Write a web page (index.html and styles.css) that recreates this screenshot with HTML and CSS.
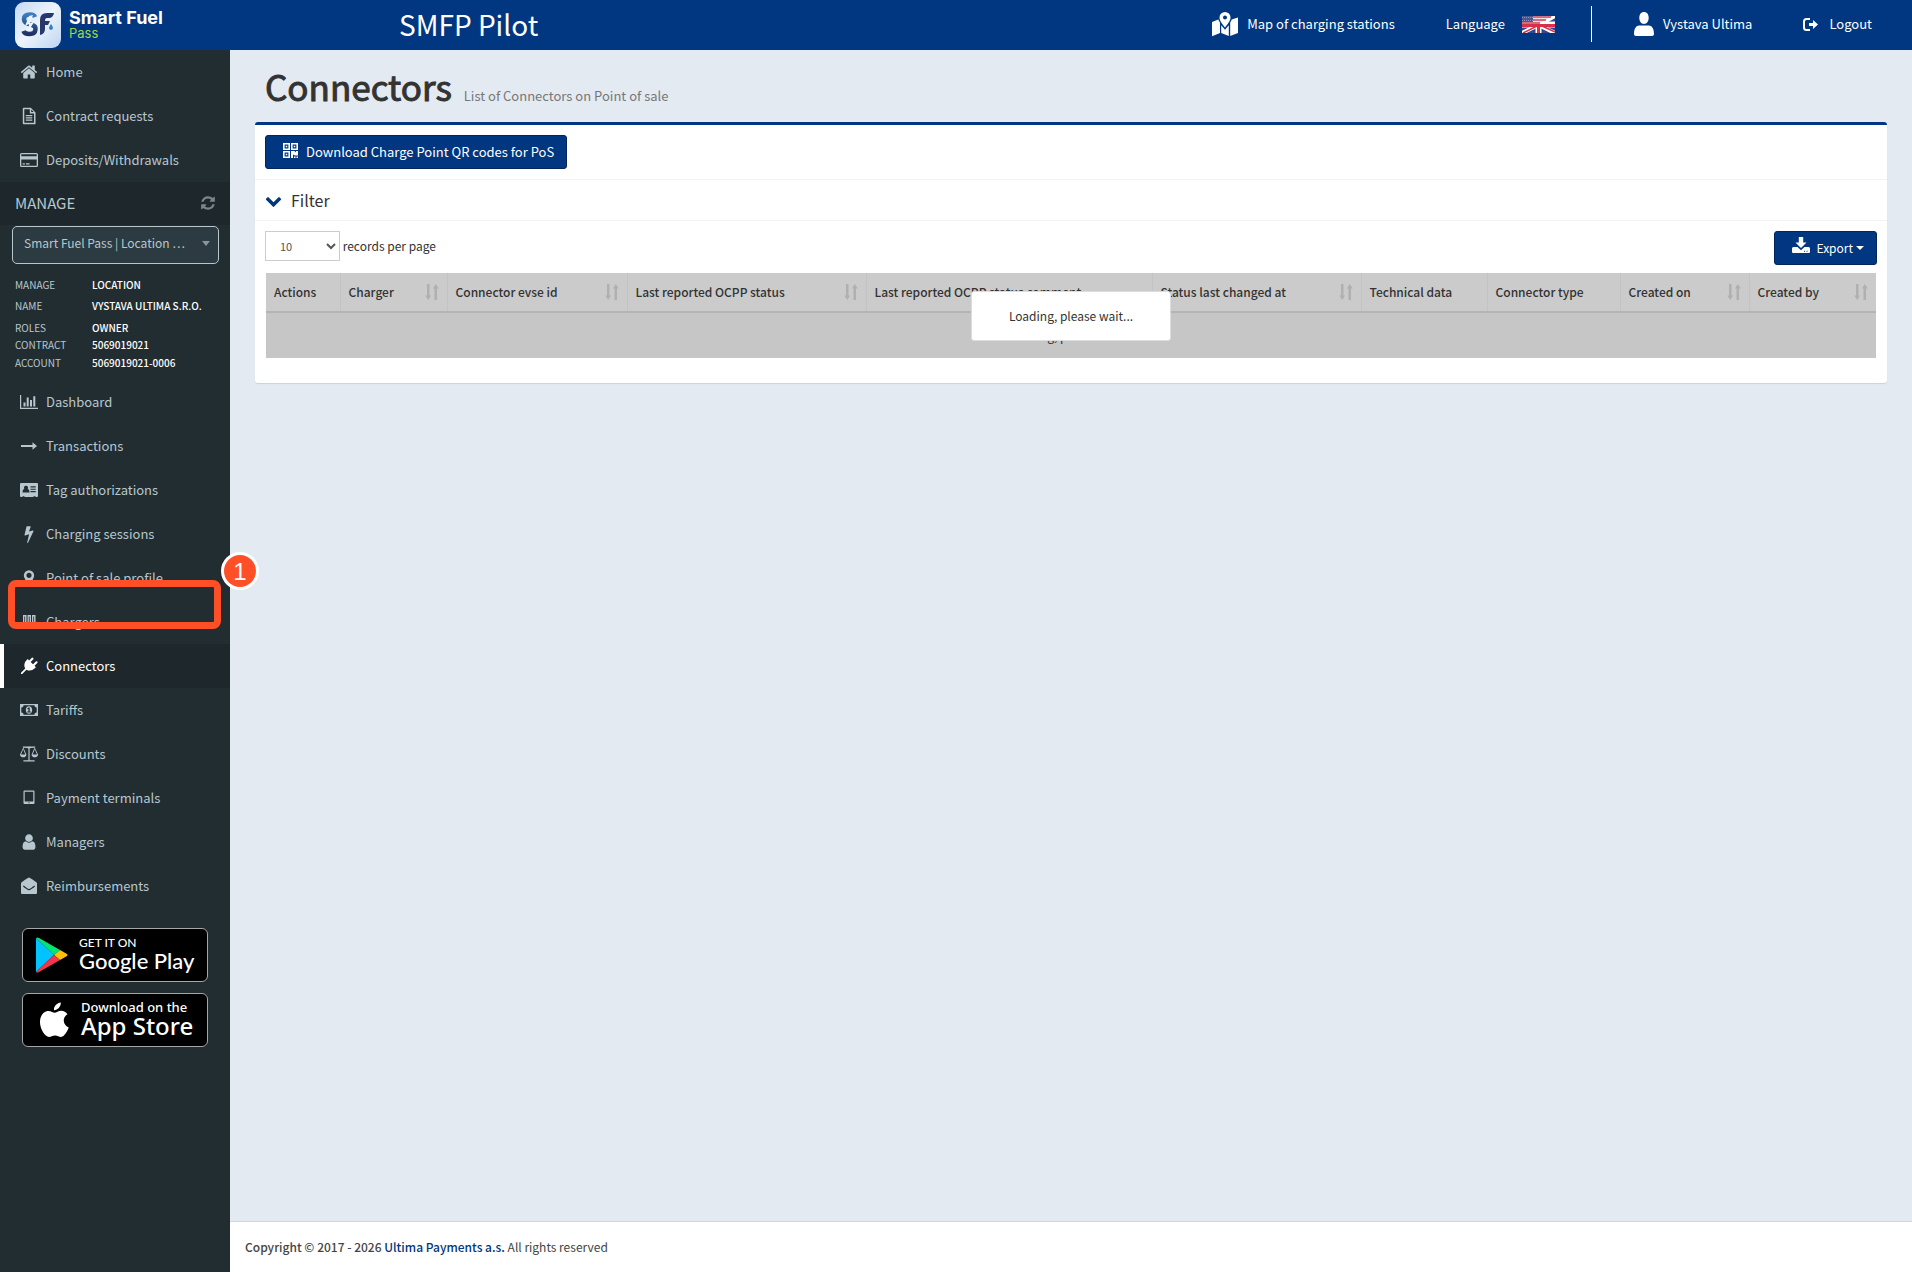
FILE: index.html
```html
<!DOCTYPE html>
<html lang="en">
<head>
  <meta charset="UTF-8" />
  <meta name="viewport" content="width=device-width, initial-scale=1" />
  <title>Connectors</title>
  <link rel="stylesheet" href="styles.css">
</head>
<body>

  <!-- Icon set -->
  <svg class="sprite" aria-hidden="true">
    <symbol id="i-home" viewBox="0 0 1792 1792"><path d="M1472 992v480q0 26-19 45t-45 19h-384v-384h-256v384h-384q-26 0-45-19t-19-45v-480q0-1 .5-3t.5-3l575-474 575 474q1 2 1 6zm223-69l-62 74q-8 9-21 11h-3q-13 0-21-7l-692-577-692 577q-12 8-24 7-13-2-21-11l-62-74q-8-10-7-23.5t11-21.5l719-599q32-26 76-26t76 26l244 204v-195q0-14 9-23t23-9h192q14 0 23 9t9 23v408l219 182q10 8 11 21.5t-7 23.5z"/></symbol>
    <symbol id="i-file" viewBox="0 0 18 18"><path fill-rule="evenodd" d="M3.800.8h7l4.700 4.700v11.700h-11.700a1 1 0 0 1-1-1V1.800a1 1 0 0 1 1-1zM4.300 2.300v13.400h9.700V6.500h-4.200V2.300zM11.200 2.600v2.500h2.500zM5.800 8h6.500v1.200H5.800zM5.800 10.300h6.500v1.200H5.800zM5.800 12.600h6.500v1.200H5.800z"/></symbol>
    <symbol id="i-card" viewBox="0 0 18 18"><path fill-rule="evenodd" d="M1.500 2h15A1.500 1.500 0 0 1 18 3.500v11a1.500 1.500 0 0 1-1.500 1.500h-15A1.500 1.500 0 0 1 0 14.500v-11A1.500 1.500 0 0 1 1.500 2zM1.300 3.300v2h15.400v-2zM1.300 8.500v6.200h15.400V8.500zM2.600 12.300h2.300v1.200H2.600zM6 12.300h3.500v1.200H6z"/></symbol>
    <symbol id="i-refresh" viewBox="0 0 1792 1792"><path d="M1639 1056q0 5-1 7-64 268-268 434.500t-478 166.500q-146 0-282.500-55t-243.500-157l-129 129q-19 19-45 19t-45-19-19-45v-448q0-26 19-45t45-19h448q26 0 45 19t19 45-19 45l-137 137q71 66 161 102t187 36q134 0 250-65t186-179q11-17 53-117 8-23 30-23h192q13 0 22.500 9.500t9.500 22.500zm25-800v448q0 26-19 45t-45 19h-448q-26 0-45-19t-19-45 19-45l138-138q-148-137-349-137-134 0-250 65t-186 179q-11 17-53 117-8 23-30 23h-199q-13 0-22.500-9.500t-9.500-22.500v-7q65-268 270-434.500t480-166.500q146 0 284 55.500t245 156.500l130-129q19-19 45-19t45 19 19 45z"/></symbol>
    <symbol id="i-chart" viewBox="0 0 18 18"><path d="M0 2h1.200v12.800H18V16H0zM3.500 9.500h2v4h-2zM6.700 4.500h2v9h-2zM10 7h2v6.500h-2zM13.300 3.200h2v10.300h-2z"/></symbol>
    <symbol id="i-arrow" viewBox="0 0 18 18"><path d="M1 7.900h11.500V5.200L17 9l-4.500 3.700v-2.600H1z"/></symbol>
    <symbol id="i-idcard" viewBox="0 0 18 18"><path fill-rule="evenodd" d="M1 2h16a1 1 0 0 1 1 1v12a1 1 0 0 1-1 1h-1.500v-.8h-2v.8h-9v-.8h-2v.8H1a1 1 0 0 1-1-1V3a1 1 0 0 1 1-1zM6 4.700a2 2 0 0 0-1.500 3.400c-1.300.2-2 1.300-2 3.400h7c0-2.100-.7-3.200-2-3.400A2 2 0 0 0 6 4.700zM10.500 5.300v1.100h5.200V5.300zM10.500 7.700v1.100h5.200V7.700zM10.500 10.100v1.100h5.200v-1.100z"/></symbol>
    <symbol id="i-bolt" viewBox="0 0 1792 1792"><path d="M1333 566q18 20 7 44l-540 1157q-13 25-42 25-4 0-14-2-17-5-25.500-19t-4.500-30l197-808-406 101q-4 1-12 1-18 0-31-11-18-15-13-39l201-825q4-14 16-23t28-9h328q19 0 32 12.500t13 29.500q0 8-5 18l-171 463 396-98q8-2 12-2 19 0 34 15z"/></symbol>
    <symbol id="i-marker" viewBox="0 0 1792 1792"><path d="M1152 640q0-106-75-181t-181-75-181 75-75 181 75 181 181 75 181-75 75-181zm256 0q0 109-33 179l-364 774q-16 33-47.500 52t-67.500 19-67.500-19-46.500-52l-365-774q-33-70-33-179 0-212 150-362t362-150 362 150 150 362z"/></symbol>
    <symbol id="i-chargers" viewBox="0 0 18 18"><path fill-rule="evenodd" d="M3 2h3.500v13H3zM7.500 2h3.500v13H7.500zM12 2h3.500v13H12zM4.300 3.500v8h.8v-8zM8.800 3.500v8h.8v-8zM13.300 3.500v8h.8v-8z"/></symbol>
    <symbol id="i-plug" viewBox="0 0 18 18"><path d="M17.300 4.500a1.100 1.100 0 0 1 0 1.500L14.500 8.800l1.400 1.400-1.400 1.400c-2.200 2.200-5.500 2.600-8 1.100L2.200 17H1v-1.200l4.200-4.300c-1.500-2.500-1.100-5.800 1.100-8L7.700 2.100l1.400 1.400L11.900.7a1.100 1.100 0 0 1 1.500 1.500L10.600 5l2.400 2.300 2.800-2.800a1.100 1.100 0 0 1 1.500 0z"/></symbol>
    <symbol id="i-money" viewBox="0 0 18 18"><path fill-rule="evenodd" d="M0 3h18v12H0zM3.600 4.300a2.300 2.300 0 0 1-2.300 2.300v4.800a2.300 2.300 0 0 1 2.300 2.300h10.800a2.300 2.300 0 0 1 2.300-2.300V6.600a2.300 2.300 0 0 1-2.300-2.300zM9 5.200c2 0 3.200 1.700 3.200 3.800S11 12.800 9 12.800 5.800 11.100 5.800 9 7 5.200 9 5.200zM8.600 6.500l-1.400 1 .6.800.6-.4v2.700H7.300v1h3.400v-1h-1V6.500z"/></symbol>
    <symbol id="i-scale" viewBox="0 0 18 18"><path fill-rule="evenodd" d="M8.400 1.500a.9.900 0 0 1 1.200 0h5.600v1h-.5L18 9.500c0 1.900-1.400 2.800-3.200 2.800s-3.200-.9-3.200-2.800l3-6.700-4.200.2a1 1 0 0 1-.8.600v11.600h5v1.200H3.400v-1.200h5V3.600a1 1 0 0 1-.8-.6l-4.200-.2 3 6.700c0 1.900-1.400 2.800-3.200 2.800S0 11.400 0 9.500l3.300-7h-.5v-1zM3.200 4.300L1 9.500h4.400zM14.800 4.300l-2.200 5.200H17z"/></symbol>
    <symbol id="i-tablet" viewBox="0 0 18 18"><path fill-rule="evenodd" d="M4.500 1.500h9a1 1 0 0 1 1 1v11.500a1 1 0 0 1-1 1h-9a1 1 0 0 1-1-1V2.500a1 1 0 0 1 1-1zM4.700 2.800v9.700h8.600V2.800zM8.500 13.200v1h1v-1z"/></symbol>
    <symbol id="i-user" viewBox="0 0 1792 1792"><path d="M1536 1399q0 109-62.500 187t-150.500 78h-854q-88 0-150.500-78t-62.500-187q0-85 8.500-160.500t31.500-152 58.500-131 94-89 134.500-34.500q131 128 313 128t313-128q76 0 134.500 34.500t94 89 58.500 131 31.500 152 8.500 160.500zm-256-887q0 159-112.500 271.500t-271.500 112.500-271.500-112.500-112.500-271.500 112.500-271.500 271.500-112.500 271.500 112.500 112.500 271.500z"/></symbol>
    <symbol id="i-envelope" viewBox="0 0 18 18"><path fill-rule="evenodd" d="M9 .5c.8 0 7.200 4.600 7.600 5.100.3.300.4.600.4 1V16a1 1 0 0 1-1 1H2a1 1 0 0 1-1-1V6.600c0-.4.100-.7.400-1C1.800 5.100 8.200.5 9 .500zM3.600 8.600l-.6.900c2.600 1.900 4.800 3.800 6 3.800s3.400-1.900 6-3.800l-.6-.9c-2.400 1.700-4.500 3.500-5.400 3.500S6 10.300 3.600 8.600z"/></symbol>
    <symbol id="i-map" viewBox="0 0 26 26"><path fill-rule="evenodd" d="M13 1a5.500 5.500 0 0 1 5.500 5.500c0 3-3 7-5.500 10-2.500-3-5.500-7-5.500-10A5.500 5.500 0 0 1 13 1zm0 3.500a2 2 0 1 0 0 4 2 2 0 0 0 0-4zM0 11l6.300-2.500c.4 1 1 2.200 1.700 3.300V22l-8 3.200zM9.200 14.200l3.800 4.500 3.800-4.500V25l-7.600-3zM18.200 11.500c.7-1 1.200-2 1.500-3L26 6.500V22l-7.800 3z"/></symbol>
    <symbol id="i-person" viewBox="0 0 20 24"><path d="M10 0c3 0 4.700 2.300 4.700 5.800S12.800 12 10 12 5.300 9.300 5.300 5.800 7 0 10 0zM5 13.500h10c3 0 5 3.500 5 8.500 0 1.300-.8 2-2 2H2c-1.200 0-2-.7-2-2 0-5 2-8.500 5-8.500z"/></symbol>
    <symbol id="i-logout" viewBox="0 0 15 13"><path d="M7 0v2H3.500Q2 2 2 3.500v6Q2 11 3.500 11H7v2H3.500Q0 13 0 9.500v-6Q0 0 3.500 0zM6 5h4V2l5 4.500-5 4.500V8H6z"/></symbol>
    <symbol id="i-qr" viewBox="0 0 15 15"><path fill-rule="evenodd" d="M0 0h7v7H0zM1.600 1.600v3.800h3.800V1.600zM2.700 2.700h1.600v1.600H2.700zM8 0h7v7H8zM9.600 1.600v3.800h3.800V1.600zM10.700 2.700h1.600v1.600h-1.600zM0 8h7v7H0zM1.600 9.600v3.800h3.800V9.600zM2.700 10.700h1.600v1.600H2.700zM8 8h3.500l1.500 1.500V8h2v4.500h-3l-2-1V15H8zM11 13.500h1.500V15H11zM13.500 13.500H15V15h-1.500z"/></symbol>
    <symbol id="i-chevron" viewBox="0 0 1792 1792"><path d="M1683 808l-742 741q-19 19-45 19t-45-19l-742-741q-19-19-19-45.500t19-45.500l166-165q19-19 45-19t45 19l531 531 531-531q19-19 45-19t45 19l166 165q19 19 19 45.500t-19 45.500z"/></symbol>
    <symbol id="i-download" viewBox="0 0 18 18"><path fill-rule="evenodd" d="M6.800 1h4.400v5.500h3.300L9 12 3.500 6.500h3.300zM0 12.500q0-1.500 1.500-1.500h4L9 14.200l3.500-3.200h4q1.500 0 1.500 1.500v3.500q0 1-1 1H1q-1 0-1-1zM12 14.700v1h1v-1zM14.500 14.700v1h1v-1z"/></symbol>
    <symbol id="i-sort" viewBox="0 0 14 16"><path d="M2 0h2.500v11.500H6L3.200 16 .300 11.500H2zM9.500 16H12V4.500h1.700L10.800 0 8 4.500h1.500z"/></symbol>
  </svg>

  <header class="navbar">
    <a href="#" class="brand">
      <svg class="brand-mark" viewBox="0 0 46 46" aria-hidden="true">
        <defs>
          <linearGradient id="mark-bg" x1="0" y1="0" x2="1" y2="1">
            <stop offset="0" stop-color="#c4daf3"/>
            <stop offset="0.500" stop-color="#edf4fb"/>
            <stop offset="1" stop-color="#bcd5f1"/>
          </linearGradient>
          <linearGradient id="mark-fg" x1="0" y1="0" x2="0" y2="1">
            <stop offset="0" stop-color="#3b7cc0"/>
            <stop offset="1" stop-color="#213066"/>
          </linearGradient>
        </defs>
        <rect width="46" height="46" rx="9" fill="url(#mark-bg)"/>
        <path d="M20 15q-1-2.500-5-2.500-6 0-6 4.500 0 3 3 4.500l5 1.500q4 1 3.500 4.500-.5 4.500-6 4.500-5 0-6-3" fill="none" stroke="url(#mark-fg)" stroke-width="4.500"/>
        <path d="M14 14l-4 10 4-2-1 8 6-10-4 1 3-8z" fill="#edf4fb"/>
        <path d="M25 33V18q0-7 7-7h7q-1 5-5 5h-2q-2 0-2 3h5l-2 4h-3v4q0 5-5 6z" fill="#28386f"/>
        <path d="M36 22q4 5 0 6-4-1 0-6z" fill="#3b7cc0"/>
      </svg>
      <span class="brand-name">Smart Fuel<span class="brand-sub">Pass</span></span>
    </a>
    <div class="site-title">SMFP Pilot</div>
    <nav class="top-links">
      <a href="#" class="map-link"><svg class="icon-map"><use href="#i-map"/></svg>Map of charging stations</a>
      <a href="#" class="lang-link">Language
        <svg class="flag" viewBox="0 0 33 17" aria-hidden="true">
          <rect width="33" height="17" fill="#34468c"/>
          <path d="M0 8.500h33M16.500 5v12" stroke="#fff" stroke-width="6"/>
          <path d="M16.500 9L33 0M16.500 9L33 17M16.500 9L0 17" stroke="#fff" stroke-width="4"/>
          <path d="M18 9l15 7M15 10L1 17" stroke="#d8304a" stroke-width="1.500"/>
          <path d="M0 9.500h33M16.500 8v9" stroke="#d8304a" stroke-width="3"/>
          <path d="M0 0h31L16 8H0z" fill="#e9dfe6"/>
          <path d="M10 1h19M10 4h14M0 7h18" stroke="#c8485c" stroke-width="1.500"/>
          <path d="M0 0h11v6H0z" fill="#4d568f"/>
          <path d="M0 1.500h11M0 4.500h11" stroke="#8e94b8" stroke-dasharray="1 1"/>
        </svg>
      </a>
      <span class="divider"></span>
      <a href="#" class="user-link"><svg class="icon-person"><use href="#i-person"/></svg>Vystava Ultima</a>
      <a href="#" class="logout-link"><svg class="icon-logout"><use href="#i-logout"/></svg>Logout</a>
    </nav>
  </header>

  <div class="wrapper">
    <aside class="sidebar">
      <ul class="menu">
        <li><a href="#"><svg><use href="#i-home"/></svg>Home</a></li>
        <li><a href="#"><svg><use href="#i-file"/></svg>Contract requests</a></li>
        <li><a href="#"><svg><use href="#i-card"/></svg>Deposits/Withdrawals</a></li>
      </ul>

      <div class="manage-head">
        <label for="location">MANAGE</label>
        <button type="button" class="refresh" aria-label="Refresh"><svg><use href="#i-refresh"/></svg></button>
      </div>
      <div class="manage-select">
        <select id="location">
          <option>Smart Fuel Pass | Location …</option>
        </select>
      </div>

      <dl class="info">
        <dt>MANAGE</dt><dd>LOCATION</dd>
        <dt>NAME</dt><dd>VYSTAVA ULTIMA S.R.O.</dd>
        <dt>ROLES</dt><dd>OWNER</dd>
        <dt>CONTRACT</dt><dd>5069019021</dd>
        <dt>ACCOUNT</dt><dd>5069019021-0006</dd>
      </dl>

      <ul class="menu">
        <li><a href="#"><svg><use href="#i-chart"/></svg>Dashboard</a></li>
        <li><a href="#"><svg><use href="#i-arrow"/></svg>Transactions</a></li>
        <li><a href="#"><svg><use href="#i-idcard"/></svg>Tag authorizations</a></li>
        <li><a href="#"><svg><use href="#i-bolt"/></svg>Charging sessions</a></li>
        <li><a href="#"><svg><use href="#i-marker"/></svg>Point of sale profile</a></li>
        <li class="marked">
          <a href="#"><svg><use href="#i-chargers"/></svg>Chargers</a>
          <span class="mark-box"></span>
          <span class="mark-number">1</span>
        </li>
        <li class="active"><a href="#"><svg><use href="#i-plug"/></svg>Connectors</a></li>
        <li><a href="#"><svg><use href="#i-money"/></svg>Tariffs</a></li>
        <li><a href="#"><svg><use href="#i-scale"/></svg>Discounts</a></li>
        <li><a href="#"><svg><use href="#i-tablet"/></svg>Payment terminals</a></li>
        <li><a href="#"><svg><use href="#i-user"/></svg>Managers</a></li>
        <li><a href="#"><svg><use href="#i-envelope"/></svg>Reimbursements</a></li>
      </ul>

      <div class="stores">
        <a href="#" class="store google">
          <svg viewBox="0 0 32 36" aria-hidden="true">
            <path d="M0 1v34l18-17z" fill="#00c3ff"/>
            <path d="M0 1q1-1 3 0l21 12-6 5z" fill="#00e676"/>
            <path d="M24 13l7 4q1 1 0 2l-7 4-6-5z" fill="#ffc107"/>
            <path d="M0 35q1 1 3 0l21-12-6-5z" fill="#f4364c"/>
          </svg>
          <span class="store-text"><small>GET IT ON</small>Google Play</span>
        </a>
        <a href="#" class="store apple">
          <svg viewBox="0 0 30 36" aria-hidden="true">
            <path fill="#fff" d="M21.500 0c.3 4-3.300 8-7 7.800C14 4 17.500.500 21.500 0zM15.300 10.500c1.500 0 3.700-2 6.700-2 2.700.1 5 1.400 6.400 3.500-5.800 3.700-4.700 11.400 1.300 13.800-1.300 3.600-4.600 9.700-7.900 9.700-2.400 0-3.300-1.500-6.200-1.500s-4 1.500-6.200 1.500C5 35.500 0 27 0 20.300 0 12.500 4.500 8.600 8.700 8.600c2.900 0 5 1.900 6.600 1.900z"/>
          </svg>
          <span class="store-text"><small>Download on the</small>App Store</span>
        </a>
      </div>
    </aside>

    <div class="page">
      <main class="content">
        <h1>Connectors <small>List of Connectors on Point of sale</small></h1>

        <section class="box">
          <div class="box-row">
            <button type="button" class="btn"><svg class="icon-qr"><use href="#i-qr"/></svg>Download Charge Point QR codes for PoS</button>
          </div>
          <div class="box-row filter">
            <a href="#"><svg><use href="#i-chevron"/></svg>Filter</a>
          </div>
          <div class="box-body">
            <div class="tools">
              <label class="length"><select><option>10</option><option>25</option><option>50</option></select> records per page</label>
              <button type="button" class="btn"><svg class="icon-export"><use href="#i-download"/></svg>Export<span class="caret"></span></button>
            </div>
            <div class="table-wrap">
              <table>
                <colgroup>
                  <col class="c-actions"><col class="c-charger"><col class="c-evse"><col class="c-status"><col class="c-comment">
                  <col class="c-changed"><col class="c-tech"><col class="c-type"><col class="c-on"><col class="c-by">
                </colgroup>
                <thead>
                  <tr>
                    <th>Actions</th>
                    <th><span>Charger<svg><use href="#i-sort"/></svg></span></th>
                    <th><span>Connector evse id<svg><use href="#i-sort"/></svg></span></th>
                    <th><span>Last reported OCPP status<svg><use href="#i-sort"/></svg></span></th>
                    <th>Last reported OCPP status comment</th>
                    <th><span>Status last changed at<svg><use href="#i-sort"/></svg></span></th>
                    <th>Technical data</th>
                    <th>Connector type</th>
                    <th><span>Created on<svg><use href="#i-sort"/></svg></span></th>
                    <th><span>Created by<svg><use href="#i-sort"/></svg></span></th>
                  </tr>
                </thead>
                <tbody>
                  <tr><td colspan="10">Loading, please wait...</td></tr>
                </tbody>
              </table>
              <div class="processing">Loading, please wait...</div>
            </div>
          </div>
        </section>
      </main>

      <footer class="footer"><strong>Copyright © 2017 - 2026 <a href="#">Ultima Payments a.s.</a></strong> All rights reserved</footer>
    </div>
  </div>

</body>
</html>
```
FILE: styles.css
```css
* {
  box-sizing: border-box;
}

body {
  margin: 0;
  min-height: 100vh;
  display: flex;
  flex-direction: column;
  background: #222d32;
  font-family: "Noto Sans CJK SC", "Noto Sans", sans-serif;
  font-size: 12px;
  line-height: 20px;
  color: #333;
}

a {
  color: inherit;
  text-decoration: none;
}

svg {
  fill: currentColor;
  flex: none;
}

button,
select {
  font: inherit;
}

.sprite {
  display: none;
}

/* Top bar */
.navbar {
  display: flex;
  align-items: center;
  height: 50px;
  padding: 0 40px 0 15px;
  background: #003780;
  color: #fff;
}

.brand {
  display: flex;
  align-items: center;
  gap: 8px;
  width: 384px;
}

.brand-mark {
  width: 46px;
  height: 46px;
}

.brand-name {
  padding-bottom: 2px;
  font: bold 18px/17px Inter, sans-serif;
}

.brand-sub {
  display: block;
  font-size: 13px;
  line-height: 14px;
  font-weight: normal;
  color: #9bd84a;
}

.site-title {
  padding-bottom: 2px;
  font-size: 28px;
}

.top-links {
  display: flex;
  align-items: center;
  margin-left: auto;
  padding-bottom: 2px;
  font-size: 13px;
}

.top-links a {
  display: flex;
  align-items: center;
}

.map-link {
  gap: 9px;
  margin-right: 51px;
}

.icon-map {
  width: 26px;
  height: 26px;
}

.lang-link {
  gap: 17px;
  margin-right: 36px;
}

.flag {
  width: 33px;
  height: 17px;
}

.divider {
  width: 1px;
  height: 36px;
  margin-right: 42px;
  background: #fff;
}

.user-link {
  gap: 9px;
  margin-right: 51px;
}

.icon-person {
  width: 20px;
  height: 24px;
}

.logout-link {
  gap: 11px;
}

.icon-logout {
  width: 15px;
  height: 13px;
}

/* Sidebar */
.wrapper {
  flex: 1;
  display: flex;
}

.sidebar {
  flex: none;
  width: 230px;
  color: #b8c7ce;
}

.menu {
  list-style: none;
  margin: 0;
  padding: 0;
  font-size: 13px;
}

.menu a {
  display: flex;
  align-items: center;
  gap: 8px;
  height: 44px;
  padding-left: 16px;
  border-left: 4px solid transparent;
}

.menu svg {
  width: 18px;
  height: 18px;
}

.active a {
  background: #1e282c;
  border-left-color: #fff;
  color: #fff;
}

.marked {
  position: relative;
}

.mark-box {
  position: absolute;
  left: 8px;
  top: -20px;
  width: 213px;
  height: 49px;
  border: 7px solid #ff4f27;
  border-radius: 8px;
}

.mark-number {
  position: absolute;
  left: 221px;
  top: -48px;
  width: 38px;
  height: 38px;
  border: 3px solid #fff;
  border-radius: 50%;
  background: #ff4f27;
  color: #fff;
  font: 24px/34px "Liberation Sans", sans-serif;
  text-align: center;
}

.manage-head {
  display: flex;
  align-items: center;
  justify-content: space-between;
  height: 43px;
  padding: 0 14px 2px 15px;
  background: #1e272c;
  font-size: 15px;
}

.refresh {
  display: flex;
  padding: 0;
  border: none;
  background: none;
  color: #7b868b;
}

.refresh svg {
  width: 16px;
  height: 16px;
}

.manage-select {
  position: relative;
  padding: 1px 11px 0 12px;
}

.manage-select select {
  display: block;
  width: 100%;
  height: 38px;
  padding: 0 24px 4px 11px;
  border: 1px solid #b8c7ce;
  border-radius: 5px;
  background: #2c3b41;
  color: #b8c7ce;
  appearance: none;
}

.manage-select::after {
  content: "";
  position: absolute;
  right: 20px;
  top: 16px;
  border: 4px solid transparent;
  border-top: 5px solid #8a9499;
  border-bottom: none;
}

.info {
  display: grid;
  grid-template-columns: 77px 1fr;
  grid-template-rows: 21px 22px 17px 18px 16px;
  margin: 0;
  padding: 13px 0 9px 15px;
  font-size: 10px;
  line-height: 16px;
}

.info dd {
  margin: 0;
  color: #fff;
  font-weight: 500;
}

.stores {
  display: grid;
  gap: 11px;
  padding: 20px 22px;
}

.store {
  display: flex;
  align-items: center;
  height: 54px;
  border: 1px solid #a6a6a6;
  border-radius: 6px;
  background: #000;
  color: #fff;
}

.store-text {
  padding-bottom: 3px;
}

.store small {
  display: block;
}

.google {
  gap: 11px;
  padding-left: 13px;
  font: 500 22px/22px Lato, sans-serif;
}

.google svg {
  width: 32px;
  height: 36px;
}

.google small {
  font-size: 12px;
  line-height: 14px;
}

.apple {
  gap: 12px;
  padding-left: 17px;
  font: 500 24px/24px "Noto Sans", sans-serif;
}

.apple svg {
  width: 29px;
  height: 36px;
}

.apple small {
  font-size: 13px;
  line-height: 14px;
}

/* Page */
.page {
  flex: 1;
  display: flex;
  flex-direction: column;
  background: #e4eaf2;
}

.content {
  flex: 1;
  padding: 16px 25px;
}

h1 {
  display: flex;
  align-items: baseline;
  gap: 12px;
  height: 44px;
  margin: 0 10px 12px;
  font-size: 35px;
  line-height: 40px;
  font-weight: 400;
  -webkit-text-stroke: 1px #333;
}

h1 small {
  font-size: 13px;
  line-height: 20px;
  color: #777;
  -webkit-text-stroke: 0;
}

.box {
  border-top: 3px solid #003780;
  border-radius: 3px;
  background: #fff;
  box-shadow: 0 1px 1px rgba(0, 0, 0, 0.1);
}

.box-row {
  padding: 10px;
  border-bottom: 1px solid #f4f4f4;
}

.btn {
  display: flex;
  align-items: center;
  height: 34px;
  padding: 0 12px 0 17px;
  border: 1px solid #00275b;
  border-radius: 3px;
  background: #003780;
  color: #fff;
}

.icon-qr {
  width: 15px;
  height: 15px;
  margin: 0 8px 4px 0;
}

.box-row .btn {
  font-size: 13px;
}

.filter a {
  display: flex;
  align-items: center;
  gap: 9px;
  font-size: 16px;
}

.filter svg {
  width: 17px;
  height: 17px;
  fill: #003780;
}

.box-body {
  padding: 10px 10px 25px;
}

.tools {
  display: flex;
  justify-content: space-between;
  align-items: flex-start;
  margin-bottom: 8px;
}

.length select {
  width: 75px;
  height: 30px;
  padding: 2px 10px;
  border: 1px solid #ccc;
  background: #fff;
  color: #555;
  font-size: 11px;
}

.icon-export {
  width: 18px;
  height: 18px;
  margin: 0 6px 6px 0;
}

.caret {
  margin-left: 3px;
  border: 4px solid transparent;
  border-top-color: #fff;
  border-bottom: none;
}

.table-wrap {
  position: relative;
  margin: 0 1px;
}

table {
  width: 100%;
  table-layout: fixed;
  border-collapse: collapse;
  background: #c6c6c6;
}

.c-actions { width: 74px; }
.c-charger { width: 107px; }
.c-evse { width: 180px; }
.c-status { width: 239px; }
.c-comment { width: 286px; }
.c-changed { width: 209px; }
.c-tech { width: 126px; }
.c-type { width: 133px; }
.c-on { width: 129px; }
.c-by { width: 127px; }

th {
  height: 39px;
  padding: 0 8px;
  border-right: 1px solid #c3c3c3;
  border-bottom: 2px solid #b4b4b4;
  background: #cbcbcb;
  text-align: left;
  font-weight: 500;
  white-space: nowrap;
}

th:last-child {
  border-right: none;
}

th span {
  display: flex;
  align-items: center;
  justify-content: space-between;
}

th svg {
  width: 14px;
  height: 16px;
  fill: #b0b0b0;
}

td {
  height: 46px;
  text-align: center;
}

/* Loading notice over the table */
.processing {
  position: absolute;
  left: 50%;
  top: 18px;
  width: 200px;
  margin-left: -100px;
  padding: 14px 0;
  border: 1px solid #ddd;
  border-radius: 3px;
  background: #fff;
  text-align: center;
}

.footer {
  padding: 15px;
  border-top: 1px solid #d2d6de;
  background: #fff;
  color: #444;
}

.footer strong {
  font-weight: 500;
}

.footer a {
  color: #003780;
}
```
